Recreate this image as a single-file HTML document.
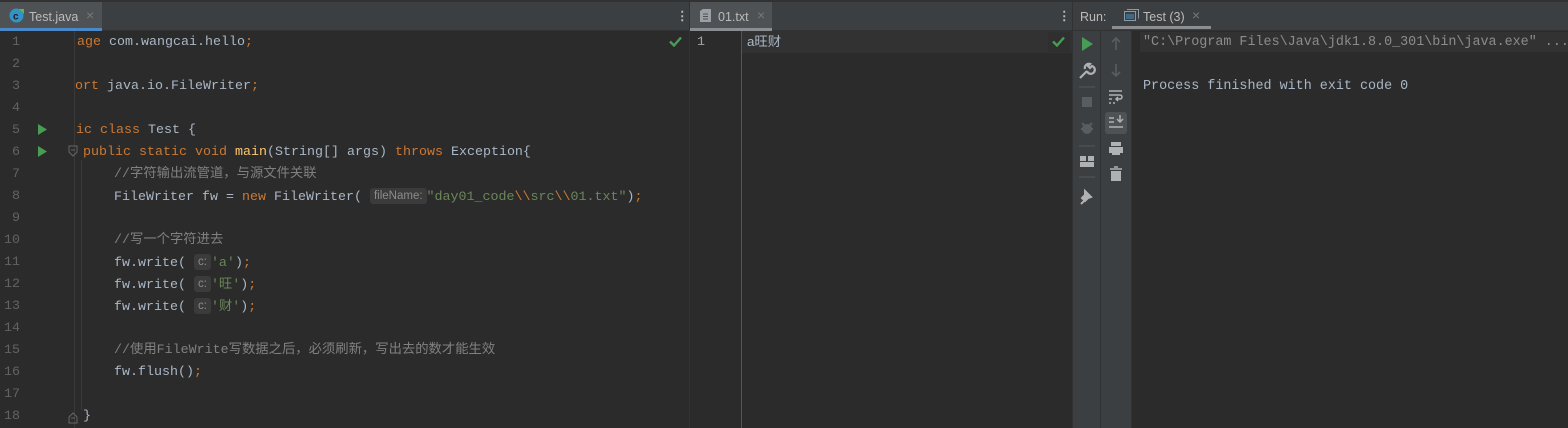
<!DOCTYPE html>
<html><head><meta charset="utf-8"><style>
*{margin:0;padding:0;box-sizing:border-box}
body{width:1568px;height:428px;background:#2b2b2b;overflow:hidden;position:relative;font-family:"Liberation Mono","Noto Sans CJK SC",monospace;font-size:13.33px;color:#a9b7c6}
.a{position:absolute;white-space:pre;line-height:18px}
.tb{position:absolute;top:0;height:31px;background:#3c3f41;border-top:2px solid #323232;border-bottom:1px solid #323232}
.ui{font-family:"Liberation Sans","Noto Sans CJK SC",sans-serif;font-size:12.5px;color:#bbbbbb}
.ln{position:absolute;color:#606366;width:20px;text-align:right;left:0;line-height:18px}
.k{color:#cc7832}.s{color:#6a8759}.c{color:#808080}.f{color:#ffc66d}
.h{background:#3b3b3b;color:#8c8c8c;font-family:"Liberation Sans",sans-serif;font-size:11.5px;padding:1px 4px;border-radius:3px;line-height:14px;display:inline-block;vertical-align:1px}
.vs{position:absolute;top:0;bottom:0;width:1px;background:#323232}
</style></head><body>
<div class="tb" style="left:0;width:689px"></div>
<div class="tb" style="left:690px;width:382px"></div>
<div class="tb" style="left:1073px;width:495px"></div>
<div class="vs" style="left:689px"></div><div class="vs" style="left:1072px"></div>
<!-- left tab -->
<div class="a" style="left:0;top:2px;width:102px;height:29px;background:#4e5254"></div>
<div class="a" style="left:0;top:28px;width:102px;height:3px;background:#4a88c7"></div>
<svg class="a" style="left:9px;top:8px" width="15" height="15"><circle cx="7.5" cy="7.5" r="7" fill="#3592c4"/><text x="4" y="11.5" font-size="10" fill="#1e1e1e" font-family="Liberation Sans" font-weight="bold">c</text><path d="M10 1 L15 1 L15 6Z" fill="#62b543"/></svg>
<div class="a ui" style="left:29px;top:8px">Test.java</div>
<div class="a ui" style="left:86px;top:6px;color:#777;font-size:14px">×</div>
<div class="a ui" style="left:676px;top:7px;font-weight:bold">⋮</div>
<!-- middle tab -->
<div class="a" style="left:690px;top:2px;width:82px;height:29px;background:#4e5254"></div>
<div class="a" style="left:690px;top:28px;width:82px;height:3px;background:#8b8e90"></div>
<svg class="a" style="left:700px;top:9px" width="11" height="13"><path d="M0 2 L3 0 L11 0 L11 13 L0 13Z" fill="#9aa0a6"/><path d="M3 5h5M3 7.5h5M3 10h5" stroke="#4e5254"/></svg>
<div class="a ui" style="left:718px;top:8px">01.txt</div>
<div class="a ui" style="left:757px;top:6px;color:#777;font-size:14px">×</div>
<div class="a ui" style="left:1058px;top:7px;font-weight:bold">⋮</div>
<!-- run tab -->
<div class="a ui" style="left:1080px;top:8px">Run:</div>
<div class="a" style="left:1112px;top:26px;width:99px;height:3px;background:#8b8e90"></div>
<svg class="a" style="left:1124px;top:9px" width="15" height="12"><rect x="0.5" y="2.5" width="11" height="9" fill="none" stroke="#8b9aa5"/><rect x="2" y="5" width="8" height="5" fill="#3e6a84"/><path d="M3 0.5h11.5v9" fill="none" stroke="#8b9aa5"/></svg>
<div class="a ui" style="left:1143px;top:8px">Test (3)</div>
<div class="a ui" style="left:1192px;top:6px;color:#777;font-size:14px">×</div>
<!-- left editor -->
<div class="a" style="left:74px;top:31px;width:1px;height:397px;background:#3a3a3a"></div>
<div class="a" style="left:81px;top:160px;width:1px;height:250px;background:#3b3b3b"></div>
<div class="ln a" style="top:34px">1</div><div class="ln a" style="top:56px">2</div><div class="ln a" style="top:78px">3</div><div class="ln a" style="top:100px">4</div><div class="ln a" style="top:122px">5</div><div class="ln a" style="top:144px">6</div><div class="ln a" style="top:166px">7</div><div class="ln a" style="top:188px">8</div><div class="ln a" style="top:210px">9</div><div class="ln a" style="top:232px">10</div><div class="ln a" style="top:254px">11</div><div class="ln a" style="top:276px">12</div><div class="ln a" style="top:298px">13</div><div class="ln a" style="top:320px">14</div><div class="ln a" style="top:342px">15</div><div class="ln a" style="top:364px">16</div><div class="ln a" style="top:386px">17</div><div class="ln a" style="top:408px">18</div>
<svg class="a" style="left:38px;top:124px" width="10" height="40"><path d="M0 0L9 5.5L0 11Z M0 22L9 27.5L0 33Z" fill="#499c54"/></svg>
<svg class="a" style="left:68px;top:144px" width="10" height="280"><path d="M1 2h8v6l-4 4l-4-4z" fill="none" stroke="#666"/><path d="M3 6h4" stroke="#666"/><path d="M1 273l4-4l4 4v6h-8z" fill="none" stroke="#666"/><path d="M3 274h4" stroke="#666"/></svg>
<div class="a" style="left:75px;top:34px;width:600px;height:394px;overflow:hidden">
<div class="a" style="left:2px;top:0"><span class="k">age</span> com.wangcai.hello<span class="k">;</span></div>
<div class="a" style="left:0;top:44px"><span class="k">ort</span> java.io.FileWriter<span class="k">;</span></div>
<div class="a" style="left:1px;top:88px"><span class="k">ic class</span> Test {</div>
<div class="a" style="left:8px;top:110px"><span class="k">public static void</span> <span class="f">main</span>(String[] args) <span class="k">throws</span> Exception{</div>
<div class="a c" style="left:39px;top:132px">//字符输出流管道，与源文件关联</div>
<div class="a" style="left:39px;top:154px">FileWriter fw = <span class="k">new</span> FileWriter( <span class="h">fileName:</span><span class="s">"day01_code<span class="k">\\</span>src<span class="k">\\</span>01.txt"</span>)<span class="k">;</span></div>
<div class="a c" style="left:39px;top:198px">//写一个字符进去</div>
<div class="a" style="left:39px;top:220px">fw.write( <span class="h">c:</span><span class="s">'a'</span>)<span class="k">;</span></div>
<div class="a" style="left:39px;top:242px">fw.write( <span class="h">c:</span><span class="s">'旺'</span>)<span class="k">;</span></div>
<div class="a" style="left:39px;top:264px">fw.write( <span class="h">c:</span><span class="s">'财'</span>)<span class="k">;</span></div>
<div class="a c" style="left:39px;top:308px">//使用FileWrite写数据之后，必须刷新，写出去的数才能生效</div>
<div class="a" style="left:39px;top:330px">fw.flush()<span class="k">;</span></div>
<div class="a" style="left:8px;top:374px">}</div>
</div>
<svg class="a" style="left:669px;top:36px" width="13" height="11"><path d="M1 5.5L5 9.5L12 1.5" fill="none" stroke="#499c54" stroke-width="2.4"/></svg>
<!-- middle editor -->
<div class="a" style="left:741px;top:31px;width:1px;height:397px;background:#555"></div>
<div class="a" style="left:742px;top:31px;width:330px;height:22px;background:#323232"></div>
<div class="a" style="left:1048px;top:32px;width:22px;height:20px;background:#2f2f2f"></div>
<div class="a" style="left:697px;top:34px;color:#a4a3a3">1</div>
<div class="a" style="left:747px;top:33px;font-family:'Liberation Sans','Noto Sans CJK SC',sans-serif">a旺财</div>
<svg class="a" style="left:1052px;top:36px" width="13" height="11"><path d="M1 5.5L5 9.5L12 1.5" fill="none" stroke="#499c54" stroke-width="2.4"/></svg>
<!-- run toolbar -->
<div class="a" style="left:1073px;top:31px;width:27px;height:397px;background:#3c3f41"></div>
<div class="a" style="left:1100px;top:31px;width:1px;height:397px;background:#323232"></div>
<div class="a" style="left:1101px;top:31px;width:30px;height:397px;background:#3c3f41"></div>
<div class="a" style="left:1131px;top:31px;width:1px;height:397px;background:#323232"></div>
<svg class="a" style="left:1073px;top:31px" width="58" height="200">
<path d="M9 6L20 13L9 20Z" fill="#499c54"/>
<path d="M7 47l7-7M14 40a4 4 0 1 0 5-5l-2 2l-2-2l2-2a4 4 0 0 0-5 5" stroke="#afb1b3" stroke-width="2.2" fill="none"/>
<path d="M6 56h16M6 115h16M6 146h16" stroke="#555"/>
<rect x="9" y="66" width="10" height="10" fill="#5a5d5f"/>
<circle cx="14" cy="98" r="5" fill="#5a5d5f"/><path d="M9 92l3 3M19 92l-3 3M8 98h12" stroke="#5a5d5f" stroke-width="2"/>
<rect x="7" y="125" width="6" height="5" fill="#afb1b3"/><rect x="15" y="125" width="6" height="5" fill="#afb1b3"/><rect x="7" y="131" width="14" height="5" fill="#afb1b3"/>
<path d="M8 173l5-5M12 160l6 6l-3 1l-3 3l-3-3l3-3z" stroke="#afb1b3" stroke-width="2" fill="#afb1b3"/>
<path d="M43 7v12M39 11l4-4l4 4M43 33v12M39 41l4 4l4-4" stroke="#5a5d5f" stroke-width="1.6" fill="none"/>
<rect x="32" y="81" width="22" height="22" rx="3" fill="#4e5254"/>
<path d="M36 60h13M36 64h11a2 2 0 0 1 0 4h-4M45 66l-2 2l2 2M36 68h3M36 72h2M40 72h2" stroke="#afb1b3" stroke-width="1.5" fill="none"/>
<path d="M36 87h5M36 91h5M36 96h14M47 84v7M44 88l3 3l3-3" stroke="#afb1b3" stroke-width="1.5" fill="none"/>
<rect x="38" y="111" width="10" height="4" fill="#afb1b3"/><rect x="36" y="116" width="14" height="6" fill="#afb1b3"/><rect x="39" y="121" width="8" height="3" fill="#afb1b3"/>
<path d="M37 138h12M41 136h4" stroke="#afb1b3" stroke-width="1.5"/><rect x="38" y="140" width="10" height="10" fill="#afb1b3"/>
</svg>
<!-- console -->
<div class="a" style="left:1140px;top:32px;width:428px;height:20px;background:#323232"></div>
<div class="a" style="left:1143px;top:34px;color:#8c8c8c;font-size:13.4px">"C:\Program Files\Java\jdk1.8.0_301\bin\java.exe" ...</div>
<div class="a" style="left:1143px;top:78px;color:#a9b7c6;font-size:13.4px">Process finished with exit code 0</div>
</body></html>
